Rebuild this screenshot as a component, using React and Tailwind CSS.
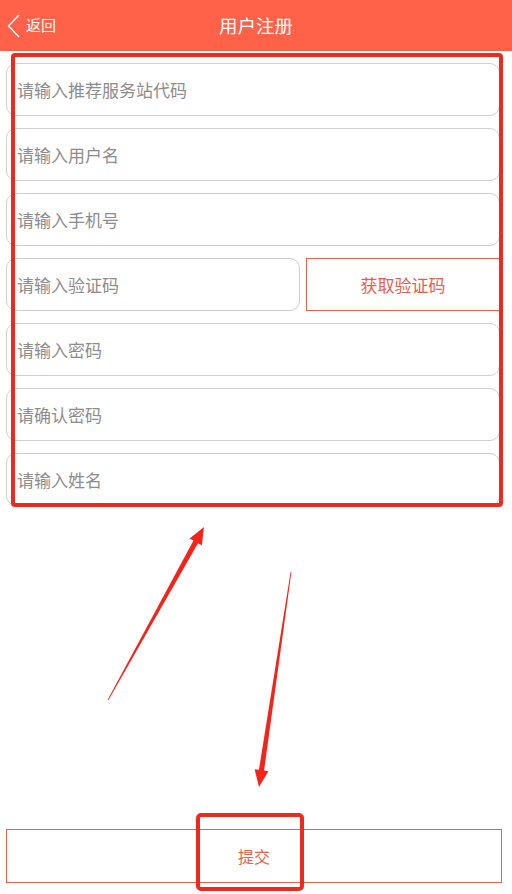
import React from "react";

const font = { fontFamily: '"Noto Sans CJK SC", "Noto Sans", sans-serif' };

const fields = [
  "请输入推荐服务站代码",
  "请输入用户名",
  "请输入手机号",
  null,
  "请输入密码",
  "请确认密码",
  "请输入姓名",
];

// tapered annotation arrow: thin tail, filled head
function arrowPoints(x1, y1, x2, y2) {
  const dx = x2 - x1;
  const dy = y2 - y1;
  const len = Math.hypot(dx, dy);
  const ux = dx / len;
  const uy = dy / len;
  const nx = -uy;
  const ny = ux;
  const head = 17;
  const bx = x2 - ux * head;
  const by = y2 - uy * head;
  const pts = [
    [x1 + nx * 0.4, y1 + ny * 0.4],
    [bx + nx * 2.6, by + ny * 2.6],
    [bx + nx * 7, by + ny * 7],
    [x2, y2],
    [bx - nx * 7, by - ny * 7],
    [bx - nx * 2.6, by - ny * 2.6],
    [x1 - nx * 0.4, y1 - ny * 0.4],
  ];
  return pts.map((p) => p.join(",")).join(" ");
}

function Field({ text, className = "" }) {
  return (
    <div
      className={`flex h-[53px] items-center rounded-[10px] border border-[#cfcfcf] bg-white pl-[10px] text-[17px] text-[#8c8c8c] ${className}`}
    >
      {text}
    </div>
  );
}

export default function App() {
  return (
    <div className="relative h-[894px] w-full overflow-hidden bg-white" style={font}>
      <header className="relative flex h-[51px] items-center justify-center bg-[#ff6149]">
        <div className="absolute left-[7px] top-0 flex h-full items-center gap-[5px] text-[15px] text-white">
          <svg width="14" height="24" viewBox="0 0 14 24" fill="none">
            <path d="M12 1 L1.5 12 L12 23" stroke="#fff" strokeWidth="1.4" />
          </svg>
          <span>返回</span>
        </div>
        <h1 className="text-[18.5px] font-normal text-white">用户注册</h1>
      </header>

      <div className="ml-[6px] mr-[12px] mt-[12px] flex flex-col gap-[12px]">
        {fields.map((f, i) =>
          f ? (
            <Field key={i} text={f} />
          ) : (
            <div key={i} className="flex gap-[6px]">
              <Field text="请输入验证码" className="w-[294px]" />
              <button className="flex h-[53px] flex-1 items-center justify-center border border-[#e8604c] bg-white text-[17px] text-[#e8604c]">
                获取验证码
              </button>
            </div>
          )
        )}
      </div>

      <div className="ml-[6px] mr-[10px] mt-[323px]">
        <button className="flex h-[54px] w-full items-center justify-center border border-[#e8604c] bg-white text-[16px] text-[#e8604c]">
          提交
        </button>
      </div>

      {/* annotation overlays */}
      <div className="pointer-events-none absolute left-[11px] top-[53px] h-[454px] w-[492px] rounded-[4px] border-[4px] border-[#ee2a1f]" />
      <div className="pointer-events-none absolute left-[196px] top-[813px] h-[78px] w-[108px] rounded-[5px] border-[4px] border-[#ee2a1f]" />
      <svg className="pointer-events-none absolute left-0 top-0" width="512" height="894">
        <polygon points={arrowPoints(108, 700, 204, 527)} fill="#f4241a" />
        <polygon points={arrowPoints(291, 572, 259, 787)} fill="#f4241a" />
      </svg>
    </div>
  );
}
